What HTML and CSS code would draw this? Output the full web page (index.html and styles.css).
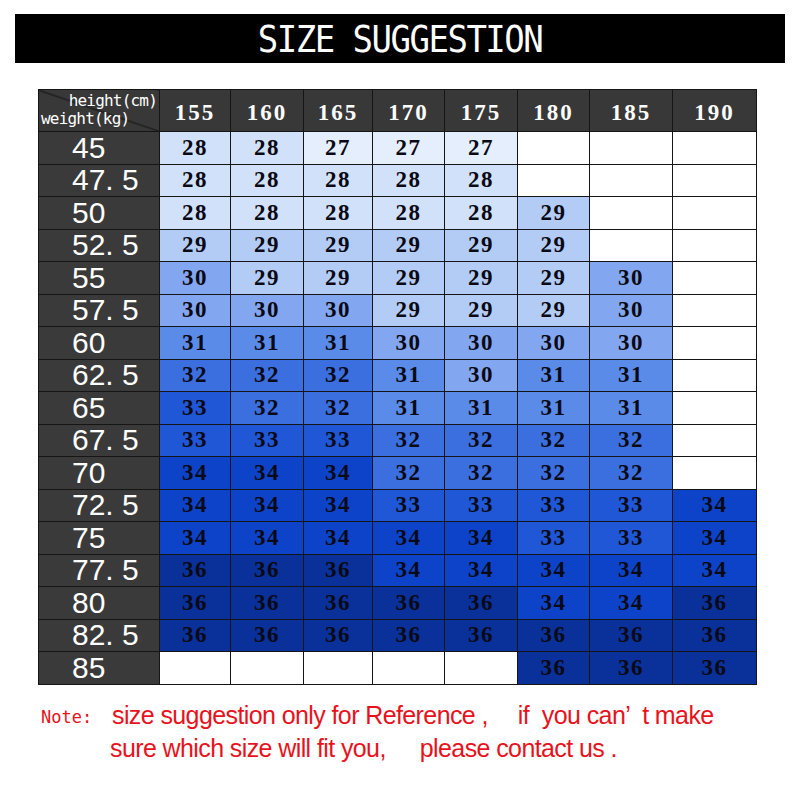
FILE: index.html
```html
<!DOCTYPE html>
<html lang="en">
<head>
    <meta charset="UTF-8">
    <meta name="viewport" content="width=device-width, initial-scale=1.0">
    <title>Size Suggestion</title>
    <link rel="stylesheet" href="styles.css">
</head>

<body>
    <!-- Title bar -->
    <header class="title-bar">
        <h1>SIZE SUGGESTION</h1>
    </header>

    <!-- Size chart: weight rows x height columns -->
    <table class="chart">
        <colgroup>
            <col class="col-weight">
            <col style="width: 71px">
            <col style="width: 73px">
            <col style="width: 69px">
            <col style="width: 72px">
            <col style="width: 73px">
            <col style="width: 72px">
            <col style="width: 83px">
            <col style="width: 84px">
        </colgroup>
        <thead>
            <tr>
                <th class="corner">
                    <span class="corner-h">height(cm)</span>
                    <span class="corner-w">weight(kg)</span>
                </th>
                <th>155</th><th>160</th><th>165</th><th>170</th><th>175</th><th>180</th><th>185</th><th>190</th>
            </tr>
        </thead>
        <tbody>
            <tr><th>45</th>
                <td class="s28">28</td><td class="s28">28</td><td class="s27">27</td><td class="s27">27</td><td class="s27">27</td><td></td><td></td><td></td></tr>
            <tr><th>47. 5</th>
                <td class="s28">28</td><td class="s28">28</td><td class="s28">28</td><td class="s28">28</td><td class="s28">28</td><td></td><td></td><td></td></tr>
            <tr><th>50</th>
                <td class="s28">28</td><td class="s28">28</td><td class="s28">28</td><td class="s28">28</td><td class="s28">28</td><td class="s29">29</td><td></td><td></td></tr>
            <tr><th>52. 5</th>
                <td class="s29">29</td><td class="s29">29</td><td class="s29">29</td><td class="s29">29</td><td class="s29">29</td><td class="s29">29</td><td></td><td></td></tr>
            <tr><th>55</th>
                <td class="s30">30</td><td class="s29">29</td><td class="s29">29</td><td class="s29">29</td><td class="s29">29</td><td class="s29">29</td><td class="s30">30</td><td></td></tr>
            <tr><th>57. 5</th>
                <td class="s30">30</td><td class="s30">30</td><td class="s30">30</td><td class="s29">29</td><td class="s29">29</td><td class="s29">29</td><td class="s30">30</td><td></td></tr>
            <tr><th>60</th>
                <td class="s31">31</td><td class="s31">31</td><td class="s31">31</td><td class="s30">30</td><td class="s30">30</td><td class="s30">30</td><td class="s30">30</td><td></td></tr>
            <tr><th>62. 5</th>
                <td class="s32">32</td><td class="s32">32</td><td class="s32">32</td><td class="s31">31</td><td class="s30">30</td><td class="s31">31</td><td class="s31">31</td><td></td></tr>
            <tr><th>65</th>
                <td class="s33">33</td><td class="s32">32</td><td class="s32">32</td><td class="s31">31</td><td class="s31">31</td><td class="s31">31</td><td class="s31">31</td><td></td></tr>
            <tr><th>67. 5</th>
                <td class="s33">33</td><td class="s33">33</td><td class="s33">33</td><td class="s32">32</td><td class="s32">32</td><td class="s32">32</td><td class="s32">32</td><td></td></tr>
            <tr><th>70</th>
                <td class="s34">34</td><td class="s34">34</td><td class="s34">34</td><td class="s32">32</td><td class="s32">32</td><td class="s32">32</td><td class="s32">32</td><td></td></tr>
            <tr><th>72. 5</th>
                <td class="s34">34</td><td class="s34">34</td><td class="s34">34</td><td class="s33">33</td><td class="s33">33</td><td class="s33">33</td><td class="s33">33</td><td class="s34">34</td></tr>
            <tr><th>75</th>
                <td class="s34">34</td><td class="s34">34</td><td class="s34">34</td><td class="s34">34</td><td class="s34">34</td><td class="s33">33</td><td class="s33">33</td><td class="s34">34</td></tr>
            <tr><th>77. 5</th>
                <td class="s36">36</td><td class="s36">36</td><td class="s36">36</td><td class="s34">34</td><td class="s34">34</td><td class="s34">34</td><td class="s34">34</td><td class="s34">34</td></tr>
            <tr><th>80</th>
                <td class="s36">36</td><td class="s36">36</td><td class="s36">36</td><td class="s36">36</td><td class="s36">36</td><td class="s34">34</td><td class="s34">34</td><td class="s36">36</td></tr>
            <tr><th>82. 5</th>
                <td class="s36">36</td><td class="s36">36</td><td class="s36">36</td><td class="s36">36</td><td class="s36">36</td><td class="s36">36</td><td class="s36">36</td><td class="s36">36</td></tr>
            <tr><th>85</th>
                <td></td><td></td><td></td><td></td><td></td><td class="s36">36</td><td class="s36">36</td><td class="s36">36</td></tr>
        </tbody>
    </table>

    <!-- Note -->
    <div class="note">
        <span class="note-label">Note:</span>
        <div class="note-text">
            <p>size suggestion only for Reference ,<span class="gap">if&nbsp; you can’</span><span class="gap-sm">t make</span></p>
            <p class="second">sure which size will fit you,<span class="gap wide">please contact us .</span></p>
        </div>
    </div>
</body>
</html>
```

FILE: styles.css
```css
body {
    background-color: #fff;
    font-family: "Liberation Sans", Arial, sans-serif;
    margin: 0;
    padding: 0;
}

.title-bar {
    background-color: #000;
    margin: 14px 15px 0 15px;
    height: 49px;
    display: flex;
    align-items: center;
    justify-content: center;
}

.title-bar h1 {
    margin: 0;
    color: #fff;
    font-family: "DejaVu Sans Mono", monospace;
    font-weight: normal;
    font-size: 34px;
    letter-spacing: -1.5px;
    transform: scaleY(1.1);
}

.chart {
    margin: 26px 0 0 38px;
    width: 718px;
    border-collapse: collapse;
    table-layout: fixed;
}

.col-weight {
    width: 121px;
}

.chart th,
.chart td {
    border: 1px solid #151515;
    padding: 0;
}

.chart thead th {
    height: 37px;
    background-color: #383838;
    color: #fff;
    font-family: "Liberation Serif", serif;
    font-weight: bold;
    font-size: 23px;
    letter-spacing: 2px;
    padding-top: 4px;
}

.chart tbody tr {
    height: 32.5px;
}

.chart tbody th {
    background-color: #3a3a3a;
    color: #fff;
    font-family: "Liberation Sans", sans-serif;
    font-weight: normal;
    font-size: 30px;
    letter-spacing: 0;
    text-align: left;
    padding-left: 33px;
    line-height: 30px;
}

.chart td {
    background-color: #fff;
    color: #0a0a14;
    font-family: "Liberation Serif", serif;
    font-weight: bold;
    font-size: 23px;
    letter-spacing: 1.5px;
    text-align: center;
}

/* corner cell with diagonal line */
.chart thead th.corner {
    position: relative;
    padding: 0;
    letter-spacing: 0;
    background-image: linear-gradient(to top right, transparent calc(50% - 1px), #111 50%, transparent calc(50% + 1px));
}

.corner span {
    position: absolute;
    font-family: "DejaVu Sans Mono", monospace;
    font-weight: normal;
    font-size: 16px;
    letter-spacing: -0.8px;
    line-height: 16px;
}

.corner-h {
    top: 3px;
    right: 2px;
}

.corner-w {
    bottom: 4px;
    left: 2px;
}

/* cell shades by size */
.s27 { background-color: #e4eefd !important; }
.s28 { background-color: #d2e1fa !important; }
.s29 { background-color: #b3ccf6 !important; }
.s30 { background-color: #82a7f0 !important; }
.s31 { background-color: #5b8be9 !important; }
.s32 { background-color: #3b6fe0 !important; }
.s33 { background-color: #1f57d7 !important; }
.s34 { background-color: #0d43c8 !important; }
.s36 { background-color: #0a3099 !important; }

.note {
    display: flex;
    margin: 14px 0 0 41px;
    color: #e8121c;
}

.note-label {
    font-family: "DejaVu Sans Mono", monospace;
    font-size: 17px;
    width: 71px;
    padding-top: 8px;
}

.note-text p {
    margin: 0;
    font-family: "Liberation Sans", sans-serif;
    font-size: 25px;
    letter-spacing: -0.6px;
    line-height: 33px;
}

.note-text p.second {
    margin-left: -2px;
}

.gap {
    margin-left: 30px;
}

.gap.wide {
    margin-left: 34px;
}

.gap-sm {
    margin-left: 12px;
}
```
